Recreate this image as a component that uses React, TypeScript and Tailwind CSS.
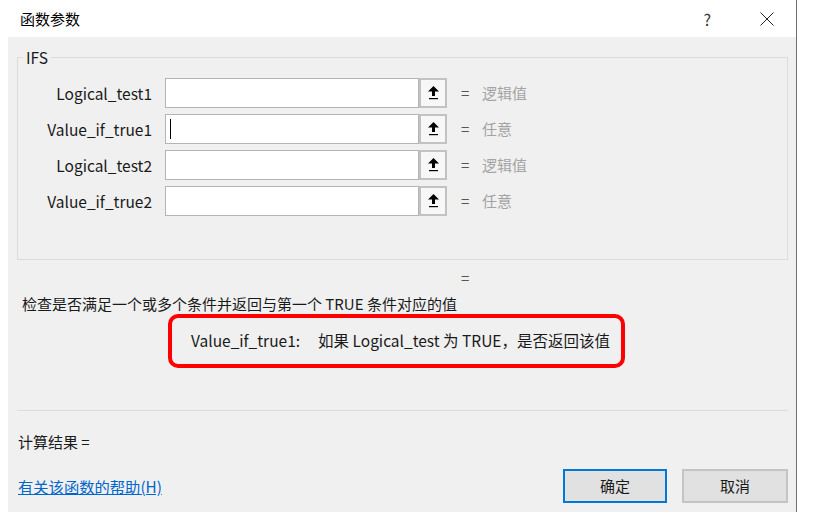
import React from "react";

const rows = [
  { label: "Logical_test1", hint: "逻辑值", cursor: false },
  { label: "Value_if_true1", hint: "任意", cursor: true },
  { label: "Logical_test2", hint: "逻辑值", cursor: false },
  { label: "Value_if_true2", hint: "任意", cursor: false },
];

function RefIcon() {
  return (
    <svg width="11" height="14" viewBox="0 0 11 14">
      <polygon points="5.5,0 11,5.5 7,5.5 7,10 4,10 4,5.5 0,5.5" fill="#000" />
      <rect x="1" y="12" width="9" height="1.2" fill="#000" />
    </svg>
  );
}

export default function App() {
  return (
    <div className="w-[813px] h-[528px] bg-white font-['Noto_Sans_CJK_SC',sans-serif] text-[15px] text-[#1a1a1a]">
      <div className="w-[797px] h-[512px] border-r border-[#6f6f6f] flex flex-col">
        {/* Title bar */}
        <div className="h-[37px] flex items-center bg-white">
          <div className="pl-[20px] text-[15px] leading-[20px] text-black">函数参数</div>
          <div className="ml-auto mr-[49px] text-[16px] leading-[20px] text-[#333]">?</div>
          <svg className="mr-[22px]" width="14" height="14" viewBox="0 0 14 14">
            <path d="M0.5 0.5 L13.5 13.5 M13.5 0.5 L0.5 13.5" stroke="#222" strokeWidth="1" fill="none" />
          </svg>
        </div>
        {/* Body */}
        <div className="flex-1 ml-[8px] bg-[#f0f0f0] pl-[9px] pr-[8px] pt-[20px] flex flex-col">
          <div className="relative h-[203px] border border-[#dcdcdc] pt-[20px]">
            <span className="absolute left-[5px] top-[-11px] px-[3px] bg-[#f0f0f0] leading-[20px] text-[15.5px]">IFS</span>
            <div className="flex flex-col gap-[6px]">
              {rows.map((r) => (
                <div key={r.label} className="flex items-center h-[30px]">
                  <div className="w-[134px] text-right leading-[20px] text-[15.5px]">{r.label}</div>
                  <div className="ml-[13px] w-[254px] h-[30px] bg-white border border-[#b4b4b4] flex items-center">
                    {r.cursor && <span className="ml-[4px] w-px h-[20px] bg-black" />}
                  </div>
                  <div className="w-[28px] h-[30px] border-2 border-[#c2c2c2] bg-[#f7f7f7] flex items-center justify-center">
                    <RefIcon />
                  </div>
                  <div className="ml-[14px] w-[10px] text-[#555] leading-[20px]">=</div>
                  <div className="ml-[11px] text-[#a3a3a3] leading-[20px]">{r.hint}</div>
                </div>
              ))}
            </div>
          </div>
          <div className="mt-[8px] h-[20px] leading-[20px] pl-[444px] text-[#555]">=</div>
          <div className="mt-[6px] h-[20px] leading-[20px] pl-[5px]">检查是否满足一个或多个条件并返回与第一个 TRUE 条件对应的值</div>
          <div className="ml-[151px] w-[457px] h-[54px] border-4 border-[#ff0000] rounded-[10px] flex items-center pl-[19px] text-[15.5px]">
            <span>Value_if_true1:</span>
            <span className="ml-[18px]">如果 Logical_test 为 TRUE，是否返回该值</span>
          </div>
          <div className="mt-[42px] h-px bg-[#dcdcdc]" />
          <div className="mt-[21px] h-[20px] leading-[20px] pl-[1px]">计算结果 =</div>
          <div className="mt-[17px] flex items-center">
            <a className="pl-[1px] text-[#0066cc] underline leading-[20px] text-[15.3px]" href="#">有关该函数的帮助(H)</a>
            <button className="ml-auto w-[104px] h-[34px] border-2 border-[#0078d7] bg-[#e1e1e1] text-[15px]">确定</button>
            <button className="ml-[15px] w-[106px] h-[34px] border-2 border-[#c4c4c4] bg-[#e1e1e1] text-[15px]">取消</button>
          </div>
        </div>
      </div>
    </div>
  );
}
